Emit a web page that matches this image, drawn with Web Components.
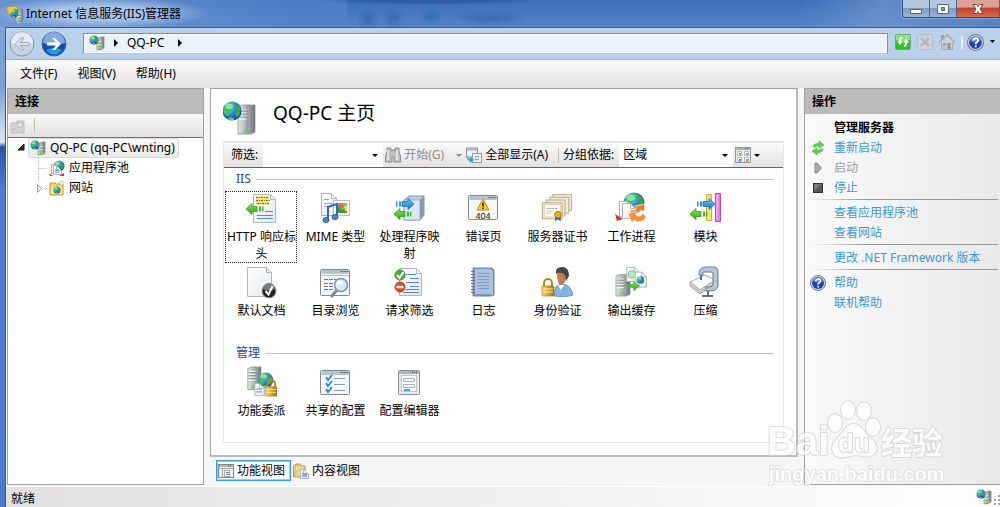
<!DOCTYPE html>
<html lang="zh-CN">
<head>
<meta charset="utf-8">
<title>Internet 信息服务(IIS)管理器</title>
<style>
  body {
    margin: 0;
    font: 12px/20px "Noto Sans", "Noto Sans CJK SC", sans-serif;
    color: #000;
  }
</style>
</head>
<body>
<iis-window>
  <iis-titlebar slot="title">Internet 信息服务(IIS)管理器</iis-titlebar>
  <iis-navbar slot="nav">QQ-PC</iis-navbar>
  <iis-menubar slot="menu">
    <button>文件(F)</button>
    <button>视图(V)</button>
    <button>帮助(H)</button>
  </iis-menubar>

  <iis-panel slot="left" heading="连接">
    <iis-tree-toolbar slot="toolbar"></iis-tree-toolbar>
    <iis-tree-node icon="server" twisty="open" selected>QQ-PC (qq-PC\wnting)
      <iis-tree-node slot="children" icon="pool" twisty="line">应用程序池</iis-tree-node>
      <iis-tree-node slot="children" icon="sites" twisty="closed">网站</iis-tree-node>
    </iis-tree-node>
  </iis-panel>

  <iis-home slot="center" heading="QQ-PC 主页">
    <iis-feature-group heading="IIS">
      <iis-feature icon="headers" selected>HTTP 响应标头</iis-feature>
      <iis-feature icon="mime">MIME 类型</iis-feature>
      <iis-feature icon="handlers">处理程序映射</iis-feature>
      <iis-feature icon="errors">错误页</iis-feature>
      <iis-feature icon="certs">服务器证书</iis-feature>
      <iis-feature icon="workers">工作进程</iis-feature>
      <iis-feature icon="modules">模块</iis-feature>
      <iis-feature icon="defaultdoc">默认文档</iis-feature>
      <iis-feature icon="browse">目录浏览</iis-feature>
      <iis-feature icon="filter">请求筛选</iis-feature>
      <iis-feature icon="log">日志</iis-feature>
      <iis-feature icon="auth">身份验证</iis-feature>
      <iis-feature icon="cache">输出缓存</iis-feature>
      <iis-feature icon="compress">压缩</iis-feature>
    </iis-feature-group>
    <iis-feature-group heading="管理">
      <iis-feature icon="delegation">功能委派</iis-feature>
      <iis-feature icon="sharedcfg">共享的配置</iis-feature>
      <iis-feature icon="cfgeditor">配置编辑器</iis-feature>
    </iis-feature-group>
    <iis-view-tab slot="tabs" icon="featview" selected>功能视图</iis-view-tab>
    <iis-view-tab slot="tabs" icon="contview">内容视图</iis-view-tab>
  </iis-home>

  <iis-panel slot="right" heading="操作" shaded>
    <iis-action-group heading="管理服务器">
      <iis-action icon="restart">重新启动</iis-action>
      <iis-action icon="start" disabled>启动</iis-action>
      <iis-action icon="stop">停止</iis-action>
    </iis-action-group>
    <iis-action-group>
      <iis-action>查看应用程序池</iis-action>
      <iis-action>查看网站</iis-action>
    </iis-action-group>
    <iis-action-group>
      <iis-action>更改 .NET Framework 版本</iis-action>
    </iis-action-group>
    <iis-action-group>
      <iis-action icon="help">帮助</iis-action>
      <iis-action>联机帮助</iis-action>
    </iis-action-group>
  </iis-panel>

  <iis-statusbar slot="status">就绪</iis-statusbar>
</iis-window>
<iis-watermark></iis-watermark>

<script>
// ---- drawing helpers shared by the icons ----
const defs = `
  <defs>
    <radialGradient id="sea" cx=".35" cy=".3" r=".8"><stop offset="0" stop-color="#8fd8ff"/><stop offset=".5" stop-color="#2a7be0"/><stop offset="1" stop-color="#0b2f9a"/></radialGradient>
    <linearGradient id="steel"><stop offset="0" stop-color="#e4e8e9"/><stop offset=".5" stop-color="#a9b1b4"/><stop offset="1" stop-color="#6f787b"/></linearGradient>
    <linearGradient id="green" x2="0" y2="1"><stop offset="0" stop-color="#8be85c"/><stop offset="1" stop-color="#2aa512"/></linearGradient>
    <linearGradient id="blue" x2="0" y2="1"><stop offset="0" stop-color="#6cc8f8"/><stop offset="1" stop-color="#1277cc"/></linearGradient>
    <linearGradient id="gold"><stop offset="0" stop-color="#fbe27a"/><stop offset=".5" stop-color="#dba52c"/><stop offset="1" stop-color="#a8700e"/></linearGradient>
    <linearGradient id="paper" x2="1" y2="1"><stop offset="0" stop-color="#fff"/><stop offset="1" stop-color="#e3e8ed"/></linearGradient>
  </defs>`;

const globe = (cx, cy, r) => `
  <g transform="translate(${cx} ${cy}) scale(${r / 10})">
    <circle r="10" fill="url(#sea)"/>
    <path d="M-8-5Q-4-10 2-9L3-6 0-4 1-1-3 0-2 3-4 6-8 3-9-1Z" fill="#3cc35a"/>
    <path d="M4-7Q8-6 9-1L8 4 5 7 3 3 5 0 3-3Z" fill="#2fae3f"/>
    <path d="M-4 8Q0 5 3 9Q0 10-4 9Z" fill="#7fd06a"/>
    <ellipse cx="-3" cy="-5" rx="4" ry="3" fill="#fff" opacity=".45"/>
  </g>`;

const page = (x, y, w, h, fill = 'url(#paper)') => `
  <path d="M${x} ${y}H${x + w - 5}L${x + w} ${y + 5}V${y + h}H${x}Z" fill="${fill}" stroke="#aeb5bb"/>
  <path d="M${x + w - 5} ${y}V${y + 5}H${x + w}Z" fill="#fff" stroke="#aeb5bb"/>`;

const leftArrow = (x, y) => `<path d="M${x} ${y}l6-5.500v3h5v5h-5v3Z" fill="url(#green)" stroke="#2f9c22" stroke-width=".8"/><path d="M${x + 13} ${y - 2.5}h2v5h-2ZM${x + 16} ${y - 2.5}h1.500v5h-1.500Z" fill="#46b830"/>`;
const rightArrow = (x, y) => `<path d="M${x} ${y}l-6-5.500v3h-6v5h6v3Z" fill="url(#blue)" stroke="#1d72b8" stroke-width=".8"/><path d="M${x - 15} ${y - 2.5}h2v5h-2ZM${x - 18} ${y - 2.5}h1.500v5h-1.500Z" fill="#2f92d8"/>`;
const tower = (x, y, w, h) => `
  <path d="M${x} ${y + 2}L${x + 4} ${y}H${x + w}V${y + h - 2}L${x + w - 4} ${y + h}H${x}Z" fill="url(#steel)" stroke="#7c8588" stroke-width=".7"/>
  <path d="M${x + 1} ${y + 5}h${w * 0.5}M${x + 1} ${y + 8}h${w * 0.5}M${x + 1} ${y + 11}h${w * 0.5}M${x + 1} ${y + 14}h${w * 0.5}" stroke="#fff"/>
  <path d="M${x + 1} ${y + 6}h${w * 0.5}M${x + 1} ${y + 9}h${w * 0.5}M${x + 1} ${y + 12}h${w * 0.5}" stroke="#5d6568" stroke-width=".6"/>
  <circle cx="${x + w * 0.4}" cy="${y + h - 3}" r="1.5" fill="#6be11c"/>`;
const lock = (x, y) => `
  <path d="M${x + 2} ${y + 7}V${y + 4}a4 4 0 0 1 8 0V${y + 7}" fill="none" stroke="#b9861f" stroke-width="2"/>
  <rect x="${x}" y="${y + 7}" width="12" height="10" rx="1" fill="url(#gold)" stroke="#a87a20" stroke-width=".7"/>
  <path d="M${x + 1} ${y + 10}h10M${x + 1} ${y + 13}h10" stroke="#fbe9a4"/>`;
const frame = (x, y, w, h) => `
  <rect x="${x}" y="${y}" width="${w}" height="${h}" rx="1" fill="#f6f8fa" stroke="#85898f"/>
  <path d="M${x + 1} ${y + 2.5}h${w - 2}" stroke="#b5c3d0" stroke-width="4"/>
  <path d="M${x + w - 9} ${y + 2}h2m1 0h2m1 0h2" stroke="#4e6175"/>`;
const serverGlobe = `${tower(8, 2, 7, 13)}${globe(5, 5, 4.5)}`;
const helpBall = `
  <circle cx="8" cy="8" r="7.5" fill="#d8dce4" stroke="#73777f"/>
  <circle cx="8" cy="8" r="6" fill="#1f44b4"/>
  <path d="M2.5 6a6 6 0 0 1 11 0Q8 9 2.5 6Z" fill="#7a9ae8" opacity=".7"/>
  <path d="M5.8 6.2Q6 4 8.2 4T10.4 6.2Q10.3 7.3 8.2 8.6V9.6M8.2 10.8V12.4" fill="none" stroke="#fff" stroke-width="1.7"/>`;

// name: [viewBox size, markup]
const ICONS = {
  app: [18, `${tower(10, 4, 7, 13)}${globe(8, 8, 4.5)}<path d="M1 2l4 0 2-1 4 1 0 3-3-1-2 3-2 2-1 2-1-4-1-2Z" fill="#f9c63a" stroke="#c98a16" stroke-width=".5"/>`],
  server: [16, serverGlobe],
  bigserver: [34, `${tower(15, 4, 17, 29)}<path d="M24 4v28" stroke="#7d8689" stroke-width=".7"/>${globe(9, 10, 9.5)}`],
  pool: [16, `${globe(10, 6, 5.5)}${page(2.5, 4.5, 8, 9)}${page(4.5, 5.5, 8, 9)}<path d="M6 10h4M6 12h4" stroke="#6f8cac"/><path d="M0 13l4 3H1ZM10 16l5-3v3Z" fill="#d23c2b"/>`],
  sites: [16, `<path d="M1 3h5l1 1h7v11H1Z" fill="#f1cf6c" stroke="#c99a35"/><path d="M11 1h3v4h-3Z" fill="#fff" stroke="#c99a35" stroke-width=".6"/><path d="M2 6h11v8H2Z" fill="#fae39a"/>${globe(8, 10, 3.5)}`],
  connect: [16, `<path d="M1 5h5l1-2h7v12H1Z" fill="#d3d2d2" stroke="#bdbcbc"/><path d="M3 12Q4 7 9 6L8 4 13 6 9 10V8Q6 9 3 12Z" fill="#f1f1f1" stroke="#a5a4a4" stroke-width=".6"/>`],
  refresh: [16, `<rect x=".5" y=".5" width="15" height="15" rx="1" fill="#2fc02a" stroke="#79a77c"/><path d="M1 1h14v5Q8 9 1 6Z" fill="#8fe680"/><path d="M7 3.500Q4.500 4.500 5 8.500" stroke="#fff" stroke-width="1.800" fill="none"/><path d="M2 7.500h6L5 11Z" fill="#fff"/><path d="M9 12.500Q11.500 11.500 11 7.500" stroke="#fff" stroke-width="1.800" fill="none"/><path d="M8 8.500h6L11 5Z" fill="#fff"/>`],
  cancel: [16, `<rect x=".5" y=".5" width="15" height="15" rx="1" fill="#cdd3da" stroke="#b4bcc5"/><path d="M4 4l8 8M12 4l-8 8" stroke="#9da5ae" stroke-width="2"/><path d="M4 4l8 8M12 4l-8 8" stroke="#dfe4e8" stroke-width=".6"/>`],
  home: [16, `<path d="M2.500 8V15.500H13.500V8" fill="#c6ccd2" stroke="#a3abb2"/><path d="M2 1h3v4H2Z" fill="#9ba4ac"/><path d="M0 8.500L8 1l8 7.500" fill="#cbd1d6" stroke="#a3abb2" stroke-width="1.500"/><path d="M8.500 9h3v6h-3Z" fill="#8d959d"/><path d="M4 9h3v3H4Z" fill="#9fa7af"/>`],
  help: [16, helpBall],
  back: [26, `<circle cx="13" cy="13" r="12" fill="#c5d3e2" stroke="#8794a3"/><path d="M2 12a11 11 0 0 1 22 0Q13 15 2 12Z" fill="#e5ecf3"/><path d="M6 13l6-6h3l-4 4.500h9v3h-9l4 4.500h-3Z" fill="#dbe3eb" stroke="#9eabb8"/>`],
  forward: [26, `<circle cx="13" cy="13" r="12" fill="#1450ab" stroke="#4d6996"/><path d="M2 12a11 11 0 0 1 22 0Q13 15 2 12Z" fill="#85a9dc"/><path d="M5 19Q13 28 21 19Q13 15 5 19Z" fill="#25b5f3" opacity=".75"/><path d="M20 13l-6-6h-3l4 4.500H6v3h9l-4 4.500h3Z" fill="#fff"/>`],
  binoculars: [16, `<path d="M2 1h4v3h1V3h2v1h1V1h4v4l1.500 4v6H9v-5H7v5H.5V9L2 5Z" fill="#c1c1c1" stroke="#8c8c8c"/><path d="M3 3v10M12 3v10" stroke="#ededed" stroke-width="1.500"/>`],
  showall: [16, `<rect x=".5" y="1" width="11" height="9" fill="#eef3f8" stroke="#8e98a8"/><path d="M1 2.500h10" stroke="#aab6c8" stroke-width="2"/><rect x="6.500" y="6.500" width="9" height="9" fill="#f5f8fb" stroke="#8e98a8"/><path d="M9 9.500h5M9 12.500h5" stroke="#5a7fc0" stroke-width="1.500" stroke-dasharray="1.500 1"/><path d="M1 7Q1 12 4 12V9.500L8 13l-4 3V14Q0 14 1 7Z" fill="#2f9ce2"/>`],
  views: [16, `<rect x=".5" y=".5" width="15" height="15" fill="#f2f0ea" stroke="#8e98a2"/><path d="M1 2h14" stroke="#a5b4c4" stroke-width="2"/><path d="M10 2h4" stroke="#4c5b70" stroke-dasharray="1 1"/><g fill="#fff" stroke="#b5b5b5"><path d="M2.500 4.500h4v4h-4ZM9.500 4.500h4v4h-4ZM2.500 10.500h4v4h-4ZM9.500 10.500h4v4h-4Z"/></g><path d="M4 6h2v2H4Z" fill="#8cb04b"/><path d="M11 6h2v2h-2Z" fill="#55b4d0"/><path d="M4 12h2v2H4Z" fill="#6b6bd8"/><path d="M11 12h2v2h-2Z" fill="#e08457"/>`],
  restart: [16, `<path d="M3 7Q4 3 9 3.500V1l5 4-5 3V6Q6 5.500 5.500 7Z" fill="#5fcf4a" stroke="#3dab34" stroke-width=".6"/><path d="M13 9Q12 13 7 12.500V15l-5-4 5-3v2Q10 10.500 10.500 9Z" fill="#5fcf4a" stroke="#3dab34" stroke-width=".6"/>`],
  start: [16, `<path d="M5 3h2l4.500 5L7 13H5Z" fill="#a9a9a9" stroke="#8d8d8d"/>`],
  stop: [16, `<rect x="3.500" y="3.500" width="9" height="9" fill="#555" stroke="#333"/><path d="M4 4h8L4 11Z" fill="#777"/>`],
  featview: [16, `<rect x=".5" y="1.500" width="15" height="13" fill="#f0efec" stroke="#858585"/><path d="M1 3h14" stroke="#b4b8bc" stroke-width="2"/><path d="M4.500 5v9M1 5.500h14" stroke="#aaa"/><path d="M10 3h4" stroke="#444" stroke-dasharray="1 1"/><rect x="6.500" y="7.500" width="5" height="6" fill="#fff" stroke="#aaa"/><path d="M8 9.500h3M8 11.500h3" stroke="#777"/>`],
  contview: [16, `<path d="M.5 14V3L3 1h4l1 2h4v11Z" fill="#f3d78b" stroke="#bf9749"/><path d="M3 1l2 4-4 9Z" fill="#fff2c4" stroke="#bf9749" stroke-width=".6"/>${page(7.5, 6.5, 8, 9)}<path d="M9 11h5M9 13h5" stroke="#3b78c4"/>`],

  headers: [32, `${page(8.5, 2.5, 22, 28)}<path d="M11 4h13v9H11Z" fill="#f0e08a"/><path d="M11 5.500h13M11 8.500h14M12 11.500h13" stroke="#7a6b20" stroke-dasharray="2 1 1 1"/>${leftArrow(1, 17)}<path d="M20 19.500h8M12 23.500h16M12 26.500h16" stroke="#4a8fd4"/>`],
  mime: [32, `${page(2.5, 1.5, 15, 22)}<path d="M5 7.500h5M5 11.500h9M5 14.500h7" stroke="#a1abb5"/><rect x="14.500" y="8.500" width="16" height="15" fill="#fff" stroke="#bdbdbd"/><path d="M17 11h11v10H17Z" fill="#69b4ee"/><path d="M17 21v-3l3-4 3 4 3-2 2 2v3Z" fill="#3f9b30"/><circle cx="22" cy="14" r="2.500" fill="#e0692c"/><path d="M25 14h3v5h-2Z" fill="#f6db4a"/><path d="M9 27V15l9-3v12" fill="none" stroke="#3a65b4" stroke-width="2"/><ellipse cx="7" cy="28" rx="3" ry="2.500" fill="#4f88d4" stroke="#2f5ba8"/><ellipse cx="16" cy="25" rx="3" ry="2.500" fill="#4f88d4" stroke="#2f5ba8"/>`],
  handlers: [32, `<path d="M11 8l5-4h15v19l-4 5H11Z" fill="#b9cade" stroke="#8193a9"/><path d="M11 8h16v20H11Z" fill="#dce6f1" stroke="#9fb0c4"/><path d="M27 8l4-4v19l-4 5Z" fill="#8499b5"/>${rightArrow(21, 12)}${leftArrow(1, 22)}`],
  errors: [32, `${frame(1.5, 3.5, 29, 24)}<path d="M16 7l6 11H10Z" fill="#ffd21c" stroke="#c58d06" stroke-linejoin="round"/><path d="M16 10.500v4M16 15.500v1.500" stroke="#222" stroke-width="1.600"/><text x="16" y="27" font-family="Liberation Sans" font-size="9" text-anchor="middle" fill="#111">404</text>`],
  certs: [34, `<g fill="#f3ead9" stroke="#b9a588"><rect x="12.500" y="2.500" width="20" height="17"/><rect x="9.500" y="5.500" width="20" height="17"/><rect x="5.500" y="8.500" width="20" height="17"/><rect x="1.500" y="11.500" width="21" height="17"/></g><rect x="3.500" y="13.500" width="17" height="13" fill="#fffdf6" stroke="#dccbaa"/><path d="M6 17.500h11" stroke="#8e8e8e" stroke-dasharray="2 1"/><path d="M6 20.500h7M6 22.500h5" stroke="#c3c3c3"/><path d="M15 25v6l3-2 3 2v-6Z" fill="#2f63c4"/><circle cx="18" cy="24" r="3.500" fill="#f3a91c" stroke="#bd7607"/>`],
  workers: [32, `${globe(19, 11, 10.5)}${page(4.5, 9.5, 13, 15)}${page(7.5, 11.5, 13, 15)}<path d="M0 22l8 5-6 2Z" fill="#d33422"/><path d="M20 14l10-2-1 8-3-2Q22 19 20 25L12 21l4-1-3-3Q18 20 22 16Z" fill="#f07a22" stroke="#fff" stroke-width=".7"/><path d="M13 22l8-3 0 4Q25 26 28 21l3 4Q26 33 19 28l-2 3Z" fill="#f8903a" stroke="#fff" stroke-width=".7"/>`],
  modules: [32, `<path d="M17.500 2.500h5v26h-5Z" fill="#ffe370" stroke="#c9ab33"/><path d="M26.500 1.500h5v28h-5Z" fill="#e77fe0" stroke="#b548b2"/><path d="M28 3v25" stroke="#fbd3f8"/>${rightArrow(26, 12)}${leftArrow(1, 22)}`],
  defaultdoc: [32, `${page(2.5, 1.5, 24, 29)}<circle cx="24" cy="25" r="7" fill="#222" stroke="#999"/><path d="M18 23a6 6 0 0 1 12 0Q24 26 18 23Z" fill="#777"/><path d="M20.500 25l3 3.500L27.500 20" fill="none" stroke="#fff" stroke-width="2"/>`],
  browse: [32, `${frame(1.5, 3.5, 29, 26)}<path d="M2 9.500h28" stroke="#b7bdc4"/><path d="M5 13.500h13M5 17.500h11M5 20.500h9M5 23.500h9" stroke="#777" stroke-dasharray="4 1"/><path d="M18 24l-6 7" stroke="#85888d" stroke-width="3"/><circle cx="22" cy="19" r="6.500" fill="#d4ecfb" stroke="#7d93a8" stroke-width="1.500"/><ellipse cx="20.500" cy="16.500" rx="3" ry="2" fill="#fff"/>`],
  filter: [32, `${page(6.5, 2.5, 22, 27)}<path d="M13 8.500h10M17 12.500h9M13 16.500h13M17 20.500h9M13 23.500h13M10 26.500h16" stroke="#6187c2"/><circle cx="7" cy="9" r="5" fill="#4cae3c" stroke="#3b8b30"/><path d="M4 9l2.500 3L10.500 6" fill="none" stroke="#fff" stroke-width="2"/><circle cx="7" cy="21" r="5" fill="#e34a1e" stroke="#b9401c"/><path d="M3.500 21h7" stroke="#fff" stroke-width="2.500"/>`],
  log: [32, `<path d="M6 2h19l2 2v25l-3 1H6Z" fill="#7d99c6" stroke="#6c84ac"/><path d="M8 3h16v25H8Z" fill="#aac1de"/><path d="M11 7.500h11M11 10.500h11M11 13.500h11M11 16.500h11M11 19.500h11M11 22.500h11" stroke="#7b9ac6"/><path d="M25 4v25" stroke="#dfe7f1"/><path d="M4 5.500h4M4 8.500h4M4 11.500h4M4 14.500h4M4 17.500h4M4 20.500h4M4 23.500h4M4 26.500h4" stroke="#6a727e"/>`],
  auth: [32, `<path d="M13 30Q13 18 21 18T32 28V29Q24 32 13 30Z" fill="#85b3e6" stroke="#4d80b8" stroke-width=".7"/><path d="M17 19l3 5 3-5Z" fill="#fff"/><path d="M16 8Q16 18 20 19 25 18 26 8 24 3 20 4Z" fill="#b8814d"/><path d="M15 8Q14 1 21 1T28 10L25 15Q25 8 21 7 17 6 15 8Z" fill="#4a4440"/>${lock(1, 13)}`],
  cache: [34, `${tower(1, 9, 15, 23)}${page(12.5, 1.5, 13, 15)}<circle cx="18" cy="9" r="4" fill="#bfe6cb" stroke="#7dbb8d"/>${page(21.5, 6.5, 12, 16)}${globe(27, 15, 4)}<path d="M13 17Q15 21 20 19V17l6 4-6 5v-3Q14 23 13 17Z" fill="url(#green)" stroke="#238b1c" stroke-width=".7"/>`],
  compress: [32, `<path d="M1 16L16 9 26 14 11 24Z" fill="#fafafa" stroke="#a5a5a5"/><path d="M1 16v4l10 8 15-9v-5L11 24Z" fill="#e2e2e2" stroke="#a5a5a5"/><path d="M1 18l10 8 15-9" fill="none" stroke="#aaa"/><path d="M10 7Q10 1 18 1H25Q29 1 29 6V19Q29 25 20 25H17V21H20Q24 21 24 18V8Q24 6 22 6H14V9H10Z" fill="#b4c6d9" stroke="#6b7c90"/><path d="M19 25v4M13 30h11M12 9v5" stroke="#666e77" stroke-width="2"/>`],
  delegation: [34, `${tower(3, 1, 14, 24)}${globe(22, 15, 8)}${page(10.5, 18.5, 10, 13)}<path d="M12 24.500h6M12 27.500h6" stroke="#5c93d0"/>${lock(22, 15)}`],
  sharedcfg: [32, `${frame(1.5, 4.5, 29, 24)}<path d="M15 12.500h11M15 18.500h11M15 24.500h11" stroke="#8e95a5"/><path d="M7 11l2 3 4-5M7 17l2 3 4-5M7 23l2 3 4-5" fill="none" stroke="#2f8fc8" stroke-width="2"/>`],
  cfgeditor: [32, `<rect x="5.500" y="4.500" width="21" height="24" rx="1" fill="#e8ebee" stroke="#8b8f94"/><path d="M6 6.500h20" stroke="#a8b4c0" stroke-width="3"/><path d="M19 6.500h6" stroke="#444" stroke-dasharray="1 1"/><rect x="8.500" y="9.500" width="15" height="16" fill="#fff" stroke="#bdc4ca"/><path d="M10.500 12.500h11v3h-11ZM10.500 18.500h11v3h-11Z" fill="#f3f5f7" stroke="#a9afb5"/><path d="M11 24h6" stroke="#29b6d2" stroke-width="2"/>`]
};

// Base class: every element renders its template into an open shadow root
class IisElement extends HTMLElement {
  connectedCallback() {
    if (this.shadowRoot) return;
    const template = document.createElement('template');
    template.innerHTML = this.template();
    this.attachShadow({ mode: 'open' }).appendChild(template.content.cloneNode(true));
  }
  attr(name) {
    return this.getAttribute(name) || '';
  }
}

class IisIcon extends IisElement {
  template() {
    const [box, shape] = ICONS[this.attr('name')];
    const size = this.attr('size') || box;
    return `
      <style>
        :host { display: block; flex: none; }
        svg { display: block; }
      </style>
      <svg width="${size}" height="${size}" viewBox="0 0 ${box} ${box}" aria-hidden="true">${defs}${shape}</svg>`;
  }
}

class IisWindow extends IisElement {
  template() {
    return `
      <style>
        :host {
          display: flex;
          flex-direction: column;
          min-height: 100vh;
          background: linear-gradient(#7ba2d8, #7c9fd6 88px, #dce8f8 142px, #2a569f 147px, #4d7dca 190px, #4a7bcb);
        }
        .client {
          flex: 1;
          display: flex;
          flex-direction: column;
          margin-left: 5px;
          border-left: 1px solid #45597b;
          background: #f6f6f6;
        }
        main {
          flex: 1;
          display: grid;
          grid-template-columns: 197px minmax(0, 1fr) 196px;
          gap: 6px;
          padding-left: 1px;
          margin-bottom: 1px;
        }
      </style>
      <slot name="title"></slot>
      <div class="client">
        <slot name="nav"></slot>
        <slot name="menu"></slot>
        <main>
          <slot name="left"></slot>
          <slot name="center"></slot>
          <slot name="right"></slot>
        </main>
        <slot name="status"></slot>
      </div>`;
  }
}

class IisTitlebar extends IisElement {
  template() {
    return `
      <style>
        :host {
          display: flex;
          justify-content: space-between;
          height: 27px;
          background:
            radial-gradient(ellipse 110px 16px at 100px 13px, #bdd3efcc 40%, #bdd3ef00),
            radial-gradient(circle 12px at 368px 18px, #2c5aa388, #2c5aa300),
            radial-gradient(circle 12px at 394px 18px, #2c5aa388, #2c5aa300),
            radial-gradient(ellipse 12px 9px at 431px 16px, #2166aa99, #2166aa00),
            radial-gradient(ellipse 40px 8px at 490px 18px, #2c5aa388, #2c5aa300),
            radial-gradient(ellipse 110px 5px at 430px 0, #224f9899 50%, #224f9800),
            linear-gradient(90deg, #8db0e088 0, #5585cc88 30%, #5585cc88 346px, #5585cc00 348px, #5585cc00 80%, #7d9fd288 88%, #5a82bd88),
            linear-gradient(#3c6fba, #5583c9);
        }
        .caption {
          display: flex;
          align-items: center;
          gap: 2px;
          padding-left: 6px;
          line-height: 24px;
        }
        .buttons {
          display: flex;
          height: 17px;
          border: 1px solid #36507c;
          border-width: 0 0 1px 1px;
          border-radius: 0 0 0 4px;
          overflow: hidden;
          box-shadow: 0 0 2px #dce8f8;
        }
        button {
          display: grid;
          place-items: center;
          width: 27px;
          padding: 0;
          border: 0;
          border-right: 1px solid #4a6490;
          background: linear-gradient(#b4c6df 45%, #7e9bc4 50%, #9cb6d9);
        }
        .close {
          width: 43px;
          background: linear-gradient(#dca194 40%, #c3422b 50%, #d66a4c);
        }
      </style>
      <div class="caption"><iis-icon name="app"></iis-icon><slot></slot></div>
      <div class="buttons">
        <button aria-label="最小化"><svg width="14" height="12"><rect x="1.500" y="6.500" width="11" height="4" fill="#fff" stroke="#596578"/></svg></button>
        <button aria-label="最大化"><svg width="14" height="12"><path d="M1.500 1.500h11v9h-11ZM5.500 4.500v3h3v-3Z" fill="#fff" fill-rule="evenodd" stroke="#596578"/></svg></button>
        <button class="close" aria-label="关闭"><svg width="14" height="12"><path d="M2 1.500h3.500l1.500 2 1.500-2H12L9 6l3 4.500H8.500l-1.500-2-1.500 2H2L5 6Z" fill="#fff" stroke="#5c4a52"/></svg></button>
      </div>`;
  }
}

class IisNavbar extends IisElement {
  template() {
    return `
      <style>
        :host {
          display: flex;
          align-items: center;
          height: 32px;
          border-top: 1px solid #45597b;
          background: #b9d1ea;
          box-shadow: inset 0 -1px #9db8d5;
        }
        button {
          display: block;
          padding: 0;
          border: 0;
          background: none;
        }
        .travel {
          display: flex;
          gap: 6px;
          padding: 0 16px 0 3px;
        }
        .address {
          flex: 1;
          display: flex;
          align-items: center;
          gap: 8px;
          height: 19px;
          padding: 0 5px;
          margin-bottom: 2px;
          border: 1px solid #868e98;
          border-bottom-color: #c3c9cf;
          box-shadow: inset 0 0 0 1px #fff;
          background: #eaf2fb;
        }
        .tools {
          display: flex;
          align-items: center;
          gap: 6px;
          padding: 0 5px 4px 7px;
        }
        .tools i {
          width: 2px;
          height: 13px;
          margin-right: -2px;
          background: #e6edf4;
        }
      </style>
      <div class="travel">
        <button aria-label="后退"><iis-icon name="back"></iis-icon></button>
        <button aria-label="前进"><iis-icon name="forward"></iis-icon></button>
      </div>
      <div class="address">
        <iis-icon name="server"></iis-icon>
        <svg width="6" height="8"><path d="M1 0l4 4-4 4Z"/></svg>
        <slot></slot>
        <svg width="12" height="8"><path d="M6 0l4 4-4 4Z"/></svg>
      </div>
      <div class="tools">
        <button aria-label="刷新"><iis-icon name="refresh"></iis-icon></button>
        <button aria-label="停止" disabled><iis-icon name="cancel"></iis-icon></button>
        <button aria-label="主页" disabled><iis-icon name="home"></iis-icon></button>
        <i></i>
        <button aria-label="帮助"><iis-icon name="help" size="17"></iis-icon></button>
        <button aria-label="更多"><svg width="5" height="10"><path d="M0 3h5L2.500 6Z"/></svg></button>
      </div>`;
  }
}

class IisMenubar extends IisElement {
  template() {
    return `
      <style>
        :host {
          display: flex;
          align-items: center;
          gap: 20px;
          height: 28px;
          padding-left: 14px;
          background: linear-gradient(#fbfbfb, #e3e1e2);
        }
        ::slotted(button) {
          padding: 0;
          border: 0;
          background: none;
          font: inherit;
          color: inherit;
        }
      </style>
      <slot></slot>`;
  }
}

class IisPanel extends IisElement {
  template() {
    return `
      <style>
        :host {
          display: block;
          border: 1px solid #a0a0a0;
          background: #fff;
        }
        :host([shaded]) {
          border-right: 0;
          background: linear-gradient(90deg, #fafafa, #e9e9e9);
        }
        h2 {
          margin: 0;
          padding: 0 7px;
          font-size: 12px;
          line-height: 25px;
          background: #bcbabb;
        }
        :host([shaded]) .body { padding-top: 4px; }
      </style>
      <h2>${this.attr('heading')}</h2>
      <slot name="toolbar"></slot>
      <div class="body"><slot></slot></div>`;
  }
}

class IisTreeToolbar extends IisElement {
  template() {
    return `
      <style>
        :host {
          display: flex;
          align-items: center;
          gap: 8px;
          height: 23px;
          padding-left: 2px;
          border-bottom: 1px solid #6b6b9c;
          background: linear-gradient(#fafafa, #e3e1e2);
        }
        button { padding: 0; border: 0; background: none; }
        i { width: 1px; height: 15px; background: #c5c3ae; }
      </style>
      <button aria-label="连接" disabled><iis-icon name="connect"></iis-icon></button><i></i>`;
  }
}

class IisTreeNode extends IisElement {
  template() {
    const twisties = {
      open: '<path d="M8 6v6H2Z" fill="#333" stroke="#111"/>',
      line: '<path d="M3.500 0v20M3.500 10.500h9" stroke="#aaa" stroke-dasharray="1 1"/>',
      closed: '<path d="M3.500 0v4M9 10.500h3" stroke="#aaa" stroke-dasharray="1 1"/><path d="M2.500 6.500v8l4-4Z" fill="#fff" stroke="#999"/>'
    };
    return `
      <style>
        :host { display: block; }
        .row {
          display: flex;
          align-items: center;
          padding-left: 8px;
          white-space: nowrap;
        }
        .label {
          display: flex;
          align-items: center;
          gap: 4px;
          padding: 0 3px 0 1px;
          line-height: 18px;
          border: 1px solid transparent;
          border-radius: 2px;
        }
        :host([selected]) .label {
          border-color: #dadada;
          background: linear-gradient(#fafafa, #e8e8e8);
        }
        .children { padding-left: 19px; }
      </style>
      <div class="row">
        <svg width="12" height="20">${twisties[this.attr('twisty')]}</svg>
        <div class="label"><iis-icon name="${this.attr('icon')}"></iis-icon><span><slot></slot></span></div>
      </div>
      <div class="children"><slot name="children"></slot></div>`;
  }
}

class IisHome extends IisElement {
  template() {
    const arrow = '<svg width="6" height="3"><path d="M0 0h6L3 3Z" fill="currentColor"/></svg>';
    return `
      <style>
        :host { display: flex; flex-direction: column; }
        .sheet {
          flex: 1;
          display: flex;
          flex-direction: column;
          padding: 12px 12px;
          border: 1px solid #a0a0a0;
          border-right: 2px solid #bbb;
          border-bottom: 2px solid #bbb;
          background: #fff;
        }
        header {
          display: flex;
          gap: 16px;
          padding-bottom: 6px;
        }
        h1 {
          margin: 0;
          font-size: 19px;
          line-height: 25px;
          font-weight: normal;
        }
        .box {
          flex: 1;
          border: 1px solid #e6e6e6;
          border-top-width: 2px;
        }
        .toolbar {
          display: flex;
          align-items: center;
          height: 24px;
          padding-left: 7px;
          white-space: nowrap;
          border-bottom: 1px solid #5c5c90;
          background: linear-gradient(#fafafa, #e3e1e2);
        }
        button, input, select {
          box-sizing: border-box;
          padding: 0;
          margin: 0;
          border: 0;
          background: none;
          font: inherit;
          color: inherit;
        }
        .combo {
          display: grid;
          grid-template-columns: 1fr 16px;
          align-items: center;
          height: 24px;
          margin: 0 2px 0 5px;
          background: #fff;
        }
        .combo > * { grid-row: 1; }
        .combo input, .combo select {
          grid-column: 1 / 3;
          width: 100%;
          height: 24px;
          padding: 0 4px;
          appearance: none;
          outline: 0;
        }
        .combo button, .combo > svg {
          grid-column: 2;
          justify-self: center;
          pointer-events: none;
        }
        .combo button { display: grid; }
        .filter { width: 120px; }
        .area { width: 114px; }
        .tool {
          display: flex;
          align-items: center;
          gap: 3px;
        }
        .tool:disabled { color: #8b8b8b; }
        .tool + .tool { margin-left: 4px; }
        .start svg { margin-left: 9px; }
        i {
          width: 1px;
          height: 15px;
          margin: 0 4px 0 10px;
          background: #c5c3ae;
        }
        .groups { padding: 0 9px; }
        .tabs {
          display: flex;
          padding: 3px 6px 4px;
        }
      </style>
      <div class="sheet">
        <header><iis-icon name="bigserver"></iis-icon><h1>${this.attr('heading')}</h1></header>
        <div class="box">
          <div class="toolbar">
            <label for="filter">筛选:</label>
            <div class="combo filter"><input id="filter" type="text"><button aria-label="筛选历史">${arrow}</button></div>
            <button class="tool start" disabled><iis-icon name="binoculars"></iis-icon>开始(G)${arrow}</button>
            <button class="tool"><iis-icon name="showall"></iis-icon>全部显示(A)</button>
            <i></i>
            <label for="area">分组依据:</label>
            <div class="combo area"><select id="area"><option>区域</option><option>类别</option><option>不分组</option></select>${arrow}</div>
            <button class="tool" aria-label="视图"><iis-icon name="views"></iis-icon>${arrow}</button>
          </div>
          <div class="groups"><slot></slot></div>
        </div>
      </div>
      <div class="tabs"><slot name="tabs"></slot></div>`;
  }
}

class IisFeatureGroup extends IisElement {
  template() {
    return `
      <style>
        :host { display: block; margin-bottom: 5px; }
        h3 {
          display: flex;
          align-items: center;
          gap: 5px;
          margin: 0;
          padding-left: 3px;
          font-size: 12px;
          line-height: 22px;
          font-weight: normal;
          color: #1e3fa8;
        }
        h3::after {
          content: "";
          flex: 1;
          height: 1px;
          background: #b7c3dc;
        }
        .items {
          display: grid;
          grid-template-columns: repeat(auto-fill, 72px);
          gap: 2px;
          margin: 1px 0 0 -8px;
        }
      </style>
      <h3>${this.attr('heading')}</h3>
      <div class="items"><slot></slot></div>`;
  }
}

class IisFeature extends IisElement {
  template() {
    return `
      <style>
        :host { display: block; }
        button {
          display: flex;
          flex-direction: column;
          align-items: center;
          box-sizing: border-box;
          width: 100%;
          min-height: 72px;
          padding: 0;
          border: 1px dotted transparent;
          background: none;
          font: inherit;
          line-height: 17px;
          color: inherit;
        }
        :host([selected]) button { border-color: #222; }
        span { margin: 4px -1px 0 0; }
      </style>
      <button><iis-icon name="${this.attr('icon')}" size="32"></iis-icon><span><slot></slot></span></button>`;
  }
}

class IisViewTab extends IisElement {
  template() {
    return `
      <style>
        :host { display: block; }
        button {
          display: flex;
          align-items: center;
          gap: 3px;
          padding: 0 5px 0 1px;
          border: 1px solid transparent;
          background: none;
          font: inherit;
          line-height: 19px;
          color: inherit;
        }
        :host([selected]) button {
          border-color: #3399ff;
          box-shadow: inset 0 0 0 1px #9cccff;
          background: #fff;
        }
      </style>
      <button><iis-icon name="${this.attr('icon')}"></iis-icon><slot></slot></button>`;
  }
}

class IisActionGroup extends IisElement {
  template() {
    const heading = this.attr('heading');
    return `
      <style>
        :host { display: block; }
        :host(:not([heading]))::before {
          content: "";
          display: block;
          height: 1px;
          margin: 1px 2px 3px 4px;
          background: linear-gradient(90deg, #99999900, #999 30%);
        }
        h3 {
          margin: 0 0 0 29px;
          font-size: 12px;
        }
      </style>
      ${heading && `<h3>${heading}</h3>`}
      <slot></slot>`;
  }
}

class IisAction extends IisElement {
  template() {
    const icon = this.attr('icon');
    return `
      <style>
        :host {
          display: grid;
          grid-template-columns: 16px 1fr;
          gap: 8px;
          align-items: center;
          padding-left: 5px;
          white-space: nowrap;
        }
        a {
          grid-column: 2;
          color: #3d98d4;
          text-decoration: none;
        }
        :host([disabled]) a { color: #9c9c9c; }
      </style>
      ${icon && `<iis-icon name="${icon}"></iis-icon>`}
      <a href="#" ${this.hasAttribute('disabled') ? 'aria-disabled="true"' : ''}><slot></slot></a>`;
  }
}

class IisStatusbar extends IisElement {
  template() {
    return `
      <style>
        :host {
          display: flex;
          align-items: center;
          justify-content: space-between;
          height: 20px;
          padding-left: 5px;
          line-height: 16px;
          border-top: 1px solid #fff;
          background: linear-gradient(90deg, #e2e0e1, #f6f6f6 70%, #fefefe);
        }
        span { padding-top: 4px; }
        .end { display: flex; align-items: end; }
      </style>
      <span><slot></slot></span>
      <div class="end">
        <iis-icon name="server"></iis-icon>
        <svg width="8" height="12"><path d="M6 2h2v2H6zM2 6h2v2H2zM6 6h2v2H6zM2 10h2v2H2zM6 10h2v2H6z" fill="#a5a5a5"/></svg>
      </div>`;
  }
}

class IisWatermark extends IisElement {
  template() {
    return `
      <style>
        :host {
          position: fixed;
          right: 46px;
          bottom: 14px;
          pointer-events: none;
        }
        svg { display: block; }
        text, path, ellipse {
          fill: #fff;
          stroke: #cfcfcf;
          stroke-width: 2px;
          paint-order: stroke;
          stroke-linejoin: round;
        }
        text { font-family: "Liberation Sans", "Noto Sans CJK SC", sans-serif; font-weight: bold; }
        .site { font-size: 20px; stroke: #dadada; }
      </style>
      <svg width="188" height="96" opacity=".75">
        <text x="1" y="58" font-size="40">Bai</text>
        <ellipse cx="69" cy="26" rx="7" ry="9"/>
        <ellipse cx="82" cy="13" rx="7" ry="9"/>
        <ellipse cx="98" cy="14" rx="7" ry="9"/>
        <ellipse cx="107" cy="30" rx="7" ry="9"/>
        <path d="M88 27Q93 27 98 34T108 44Q113 51 109 56 105 61 97 59 88 57 80 60 70 62 67 55 64 48 71 42L79 32Q83 27 88 27Z"/>
        <text x="72" y="55" font-size="26">du</text>
        <text x="115" y="57" font-size="31">经验</text>
        <text x="3" y="84" class="site">jingyan.baidu.com</text>
      </svg>`;
  }
}

customElements.define('iis-icon', IisIcon);
customElements.define('iis-window', IisWindow);
customElements.define('iis-titlebar', IisTitlebar);
customElements.define('iis-navbar', IisNavbar);
customElements.define('iis-menubar', IisMenubar);
customElements.define('iis-panel', IisPanel);
customElements.define('iis-tree-toolbar', IisTreeToolbar);
customElements.define('iis-tree-node', IisTreeNode);
customElements.define('iis-home', IisHome);
customElements.define('iis-feature-group', IisFeatureGroup);
customElements.define('iis-feature', IisFeature);
customElements.define('iis-view-tab', IisViewTab);
customElements.define('iis-action-group', IisActionGroup);
customElements.define('iis-action', IisAction);
customElements.define('iis-statusbar', IisStatusbar);
customElements.define('iis-watermark', IisWatermark);
</script>
</body>
</html>
